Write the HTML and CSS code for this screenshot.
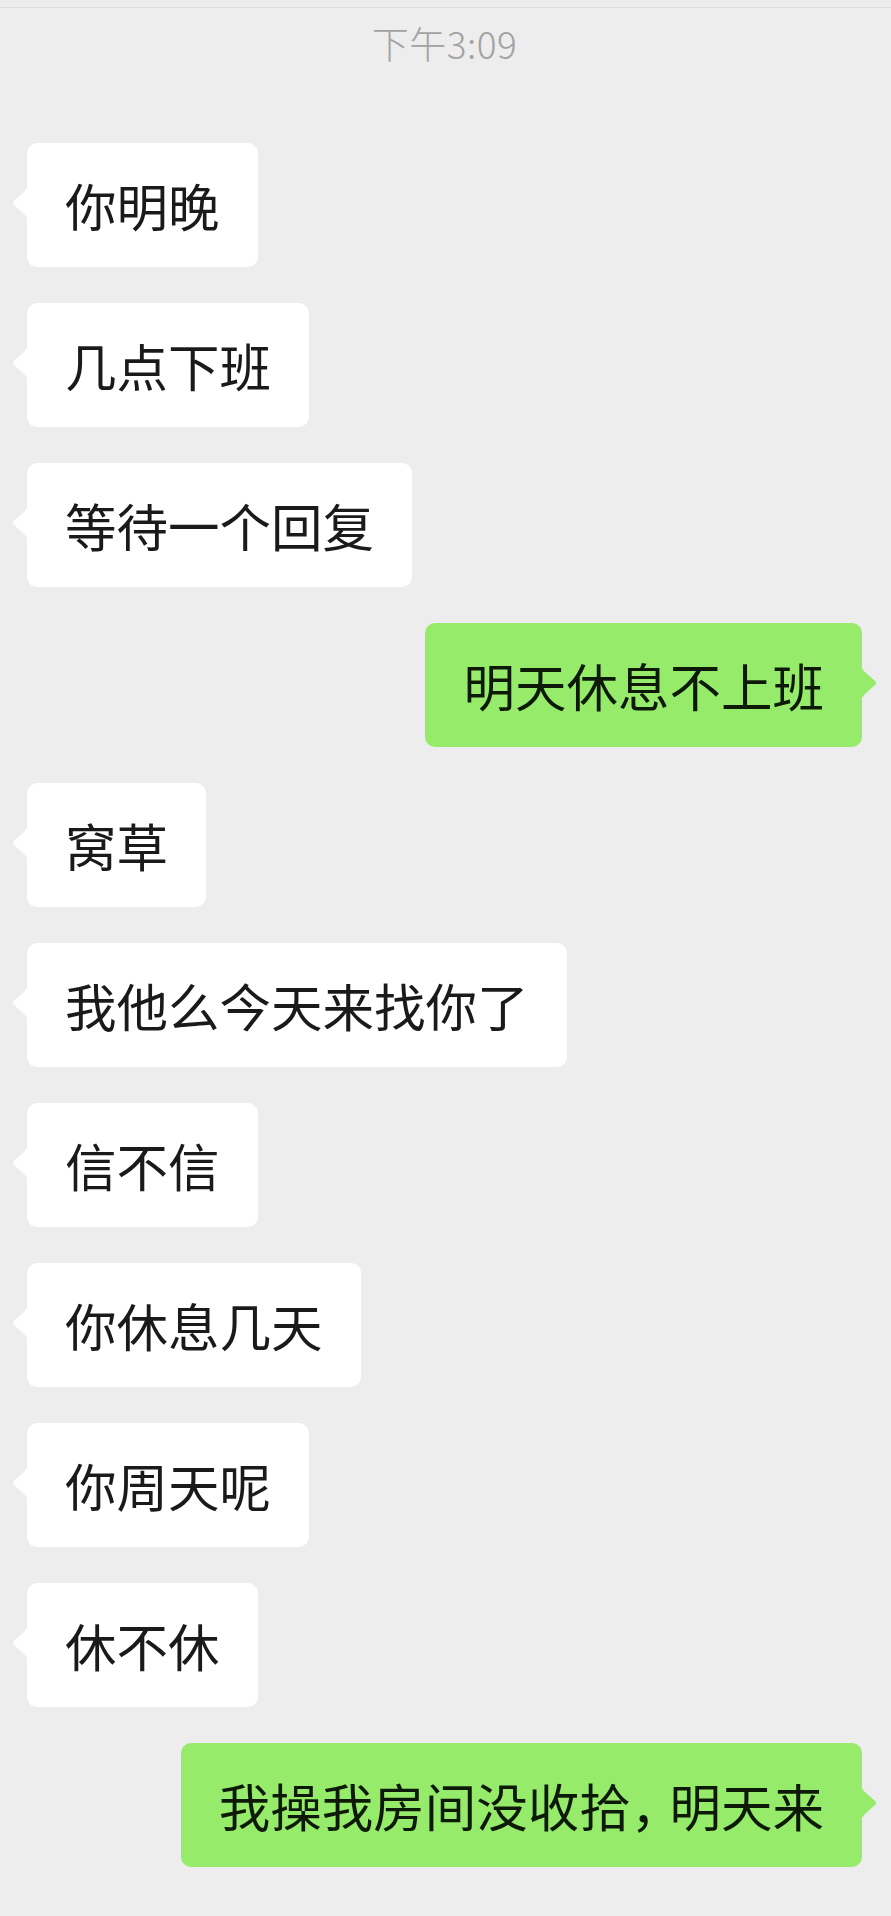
FILE: index.html
```html
<!DOCTYPE html>
<html lang="zh-CN">
<head>
  <meta charset="UTF-8">
  <meta name="viewport" content="width=device-width, initial-scale=1.0">
  <title>聊天</title>
  <link rel="stylesheet" href="styles.css">
</head>
<body>
  <div class="topbar"></div>

  <div class="chat">
    <div class="time">下午3:09</div>

    <div class="msg left"><div class="bubble">你明晚</div></div>
    <div class="msg left"><div class="bubble">几点下班</div></div>
    <div class="msg left"><div class="bubble">等待一个回复</div></div>
    <div class="msg right"><div class="bubble">明天休息不上班</div></div>
    <div class="msg left"><div class="bubble">窝草</div></div>
    <div class="msg left"><div class="bubble">我他么今天来找你了</div></div>
    <div class="msg left"><div class="bubble">信不信</div></div>
    <div class="msg left"><div class="bubble">你休息几天</div></div>
    <div class="msg left"><div class="bubble">你周天呢</div></div>
    <div class="msg left"><div class="bubble">休不休</div></div>
    <div class="msg right"><div class="bubble">我操我房间没收拾<span class="punct">，</span>明天来</div></div>
  </div>
</body>
</html>
```

FILE: styles.css
```css
body {
  margin: 0;
  background: #ededed;
  font-family: "Noto Sans CJK SC", "Noto Sans", sans-serif;
}
.topbar {
  height: 7px;
  border-bottom: 1px solid #dedede;
}
.chat {
  display: flex;
  flex-direction: column;
  gap: 36px;
  padding: 0 29px 0 27px;
}
.time {
  margin-top: 13px;
  margin-bottom: 42px;
  text-align: center;
  font-size: 37px;
  font-weight: 300;
  line-height: 44px;
  letter-spacing: 0.5px;
  color: #a2a2a2;
}
.msg {
  display: flex;
}
.msg.right {
  justify-content: flex-end;
}
.bubble {
  position: relative;
  padding: 26px 38px;
  font-size: 51.5px;
  line-height: 72px;
  border-radius: 10px;
  background: #fff;
  color: #1a1a1a;
}
.bubble::before {
  content: "";
  position: absolute;
  top: 38px;
  left: -15px;
  width: 16px;
  height: 44px;
  background: inherit;
  clip-path: path("M16,0 C16,6 15,8 12,11 L1.4,20.6 Q0,22 1.4,23.4 L12,33 C15,36 16,38 16,44 Z");
}
.punct {
  letter-spacing: -0.25em;
}
.right .bubble {
  background: #97eb6b;
  color: #0d1a08;
}
.right .bubble::before {
  left: auto;
  right: -15px;
  transform: scaleX(-1);
}
```
